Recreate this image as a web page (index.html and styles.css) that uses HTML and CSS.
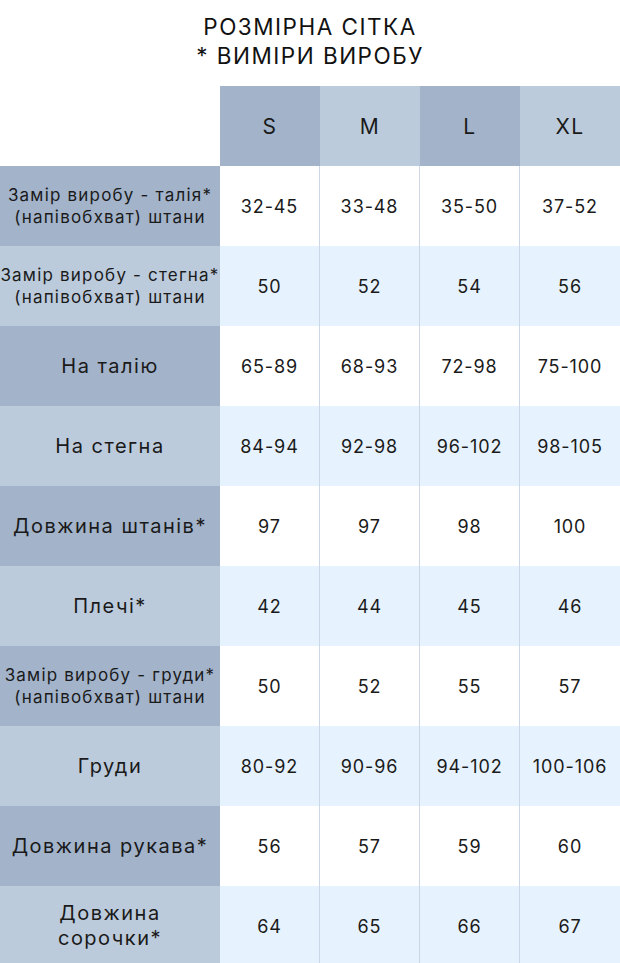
FILE: index.html
```html
<!DOCTYPE html>
<html lang="uk">
<head>
<meta charset="utf-8">
<title>Розмірна сітка</title>
<link rel="stylesheet" href="styles.css">
</head>
<body>
<div class="page">
  <h1 class="title">РОЗМІРНА СІТКА<br>* ВИМІРИ ВИРОБУ</h1>
  <div class="grid">
    <div class="corner"></div>
    <div class="hd dark">S</div>
    <div class="hd light">M</div>
    <div class="hd dark">L</div>
    <div class="hd light">XL</div>

    <div class="lab dark small">Замір виробу - талія*<br>(напівобхват) штани</div>
    <div class="v">32-45</div><div class="v">33-48</div><div class="v">35-50</div><div class="v">37-52</div>

    <div class="lab light small">Замір виробу - стегна*<br>(напівобхват) штани</div>
    <div class="v alt">50</div><div class="v alt">52</div><div class="v alt">54</div><div class="v alt">56</div>

    <div class="lab dark">На талію</div>
    <div class="v">65-89</div><div class="v">68-93</div><div class="v">72-98</div><div class="v">75-100</div>

    <div class="lab light">На стегна</div>
    <div class="v alt">84-94</div><div class="v alt">92-98</div><div class="v alt">96-102</div><div class="v alt">98-105</div>

    <div class="lab dark">Довжина штанів*</div>
    <div class="v">97</div><div class="v">97</div><div class="v">98</div><div class="v">100</div>

    <div class="lab light">Плечі*</div>
    <div class="v alt">42</div><div class="v alt">44</div><div class="v alt">45</div><div class="v alt">46</div>

    <div class="lab dark small">Замір виробу - груди*<br>(напівобхват) штани</div>
    <div class="v">50</div><div class="v">52</div><div class="v">55</div><div class="v">57</div>

    <div class="lab light">Груди</div>
    <div class="v alt">80-92</div><div class="v alt">90-96</div><div class="v alt">94-102</div><div class="v alt">100-106</div>

    <div class="lab dark">Довжина рукава*</div>
    <div class="v">56</div><div class="v">57</div><div class="v">59</div><div class="v">60</div>

    <div class="lab light">Довжина<br>сорочки*</div>
    <div class="v alt">64</div><div class="v alt">65</div><div class="v alt">66</div><div class="v alt">67</div>
  </div>
</div>
</body>
</html>
```

FILE: styles.css
```css
html, body {
  margin: 0;
  padding: 0;
  background: #ffffff;
}
body {
  font-family: "Inter", "Open Sans", sans-serif;
  color: #1a1a1a;
}
.page {
  width: 620px;
}
.title {
  margin: 0;
  height: 86px;
  box-sizing: border-box;
  padding-top: 12px;
  text-align: center;
  font-weight: 400;
  font-size: 22.5px;
  line-height: 29px;
  letter-spacing: 1.5px;
  color: #111;
}
.grid {
  display: grid;
  grid-template-columns: 220px 100px 100px 100px 100px;
  grid-auto-rows: 80px;
}
.grid > div {
  display: flex;
  align-items: center;
  justify-content: center;
  text-align: center;
  white-space: nowrap;
}
.hd {
  font-size: 21px;
  letter-spacing: 1.5px;
}
.dark { background: #a2b3ca; }
.light { background: #bccbdc; }
.lab {
  font-size: 20px;
  line-height: 25px;
  letter-spacing: 1.5px;
}
.lab.small {
  font-size: 17px;
  line-height: 22px;
  letter-spacing: 1.2px;
}
.v {
  font-size: 18px;
  letter-spacing: 0.9px;
  background: #ffffff;
  border-right: 1px solid #cbd7e6;
}
.v.alt {
  background: #e6f2fd;
}
.grid > .v:nth-child(5n) {
  border-right: none;
}
```
